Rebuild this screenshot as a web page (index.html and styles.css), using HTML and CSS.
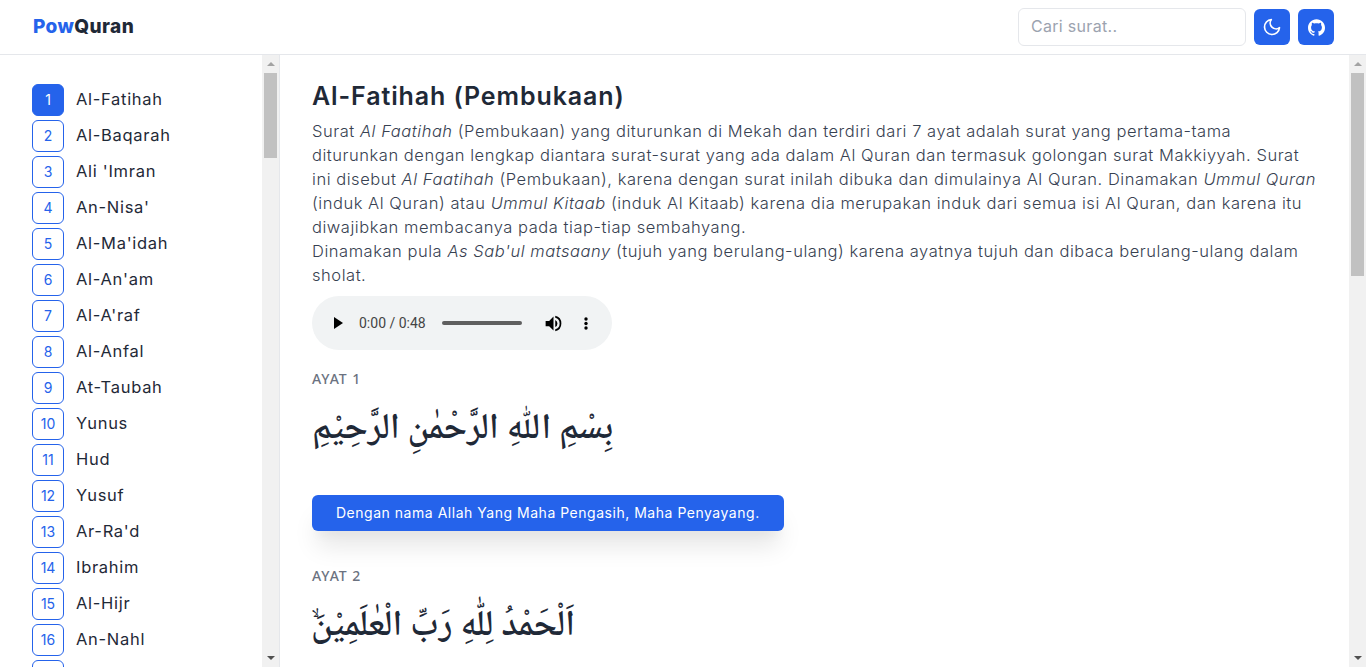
FILE: index.html
```html
<!DOCTYPE html>
<html>
<head>
<meta charset="utf-8">
<meta name="viewport" content="width=device-width, initial-scale=1">
<title>PowQuran</title>
<link rel="stylesheet" href="styles.css">
</head>
<body>

<header class="topbar">
  <a class="logo" href="#"><span class="logo-pow">Pow</span>Quran</a>
  <div class="topbar-right">
    <input class="search" type="text" placeholder="Cari surat..">
    <button class="icon-btn" type="button" aria-label="Mode gelap">
      <svg width="20" height="20" viewBox="0 0 24 24" fill="none" stroke="#fff" stroke-width="2" stroke-linecap="round" stroke-linejoin="round"><path d="M21 12.79A9 9 0 1 1 11.21 3 7 7 0 0 0 21 12.79z"/></svg>
    </button>
    <button class="icon-btn" type="button" aria-label="GitHub">
      <svg width="17" height="17" viewBox="0 0 24 24" fill="#fff"><path d="M12 .297c-6.63 0-12 5.373-12 12 0 5.303 3.438 9.8 8.205 11.385.6.113.82-.258.82-.577 0-.285-.01-1.04-.015-2.04-3.338.724-4.042-1.61-4.042-1.61C4.422 18.07 3.633 17.7 3.633 17.7c-1.087-.744.084-.729.084-.729 1.205.084 1.838 1.236 1.838 1.236 1.07 1.835 2.809 1.305 3.495.998.108-.776.417-1.305.76-1.605-2.665-.3-5.466-1.332-5.466-5.93 0-1.31.465-2.38 1.235-3.22-.135-.303-.54-1.523.105-3.176 0 0 1.005-.322 3.3 1.23.96-.267 1.98-.399 3-.405 1.02.006 2.04.138 3 .405 2.28-1.552 3.285-1.23 3.285-1.23.645 1.653.24 2.873.12 3.176.765.84 1.23 1.91 1.23 3.22 0 4.61-2.805 5.625-5.475 5.92.42.36.81 1.096.81 2.22 0 1.606-.015 2.896-.015 3.286 0 .315.21.69.825.57C20.565 22.092 24 17.592 24 12.297c0-6.627-5.373-12-12-12"/></svg>
    </button>
  </div>
</header>

<div class="layout">
  <div class="sidebar">
    <nav class="surah-list">
      <a class="surah active" href="#"><span class="num">1</span>Al-Fatihah</a>
      <a class="surah" href="#"><span class="num">2</span>Al-Baqarah</a>
      <a class="surah" href="#"><span class="num">3</span>Ali 'Imran</a>
      <a class="surah" href="#"><span class="num">4</span>An-Nisa'</a>
      <a class="surah" href="#"><span class="num">5</span>Al-Ma'idah</a>
      <a class="surah" href="#"><span class="num">6</span>Al-An'am</a>
      <a class="surah" href="#"><span class="num">7</span>Al-A'raf</a>
      <a class="surah" href="#"><span class="num">8</span>Al-Anfal</a>
      <a class="surah" href="#"><span class="num">9</span>At-Taubah</a>
      <a class="surah" href="#"><span class="num">10</span>Yunus</a>
      <a class="surah" href="#"><span class="num">11</span>Hud</a>
      <a class="surah" href="#"><span class="num">12</span>Yusuf</a>
      <a class="surah" href="#"><span class="num">13</span>Ar-Ra'd</a>
      <a class="surah" href="#"><span class="num">14</span>Ibrahim</a>
      <a class="surah" href="#"><span class="num">15</span>Al-Hijr</a>
      <a class="surah" href="#"><span class="num">16</span>An-Nahl</a>
      <a class="surah" href="#"><span class="num"></span></a>
    </nav>
    <div class="scrollbar">
      <span class="arrow-up"></span>
      <span class="thumb thumb-side"></span>
      <span class="arrow-down"></span>
    </div>
  </div>

  <div class="content">
    <main class="content-body">
      <h1 class="title">Al-Fatihah (Pembukaan)</h1>
      <p class="desc">Surat <i>Al Faatihah</i> (Pembukaan) yang diturunkan di Mekah dan terdiri dari 7 ayat adalah surat yang pertama-tama diturunkan dengan lengkap diantara surat-surat yang ada dalam Al Quran dan termasuk golongan surat Makkiyyah. Surat ini disebut <i>Al Faatihah</i> (Pembukaan), karena dengan surat inilah dibuka dan dimulainya Al Quran. Dinamakan <i>Ummul Quran</i> (induk Al Quran) atau <i>Ummul Kitaab</i> (induk Al Kitaab) karena dia merupakan induk dari semua isi Al Quran, dan karena itu diwajibkan membacanya pada tiap-tiap sembahyang.<br>Dinamakan pula <i>As Sab'ul matsaany</i> (tujuh yang berulang-ulang) karena ayatnya tujuh dan dibaca berulang-ulang dalam sholat.</p>

      <div class="player">
        <svg class="play" width="9" height="12" viewBox="0 0 9 12"><path d="M0 0l9 6-9 6z" fill="#000"/></svg>
        <span class="time">0:00 / 0:48</span>
        <span class="track"></span>
        <svg class="vol" width="21" height="21" viewBox="0 0 24 24" fill="#000"><path d="M3 9v6h4l5 5V4L7 9H3zm13.5 3A4.5 4.5 0 0 0 14 7.970v8.050A4.500 4.500 0 0 0 16.500 12zM14 3.230v2.060a7 7 0 0 1 0 13.420v2.060a9 9 0 0 0 0-17.540z"/></svg>
        <svg class="more" width="4" height="13" viewBox="0 0 4 13" fill="#000"><circle cx="2" cy="2" r="1.700"/><circle cx="2" cy="6.500" r="1.700"/><circle cx="2" cy="11" r="1.700"/></svg>
      </div>

      <section class="ayat">
        <div class="ayat-label">AYAT 1</div>
        <div class="arab" lang="ar" dir="rtl">بِسْمِ اللّٰهِ الرَّحْمٰنِ الرَّحِيْمِ</div>
        <div class="arti">Dengan nama Allah Yang Maha Pengasih, Maha Penyayang.</div>
      </section>
      <section class="ayat">
        <div class="ayat-label">AYAT 2</div>
        <div class="arab" lang="ar" dir="rtl">اَلْحَمْدُ لِلّٰهِ رَبِّ الْعٰلَمِيْنَ<span class="waqf">لا</span></div>
      </section>
    </main>
    <div class="scrollbar">
      <span class="arrow-up"></span>
      <span class="thumb thumb-main"></span>
      <span class="arrow-down"></span>
    </div>
  </div>
</div>

</body>
</html>
```

FILE: styles.css
```css
* {
  box-sizing: border-box;
}

html, body {
  height: 100%;
}

body {
  margin: 0;
  display: flex;
  flex-direction: column;
  overflow: hidden;
  font-family: Inter, "Noto Sans", sans-serif;
  color: #1f2937;
  background-color: white;
}

a {
  color: inherit;
  text-decoration: none;
}

/* top bar */
.topbar {
  flex: none;
  height: 55px;
  display: flex;
  align-items: center;
  justify-content: space-between;
  padding: 0 32px;
  border-bottom: 1px solid #e5e7eb;
}

.logo {
  font-size: 19px;
  font-weight: 800;
  letter-spacing: 0.4px;
  padding: 0 0 1px 1px;
}

.logo-pow {
  color: #2563eb;
}

.topbar-right {
  display: flex;
  align-items: center;
  gap: 8px;
}

.search {
  width: 228px;
  height: 38px;
  padding: 0 12px 2px;
  border: 1px solid #e5e7eb;
  border-radius: 6px;
  font-family: inherit;
  font-size: 16px;
  letter-spacing: 0.3px;
  outline: none;
}

.search::placeholder {
  color: #9ca3af;
}

.icon-btn {
  width: 36px;
  height: 36px;
  display: flex;
  align-items: center;
  justify-content: center;
  padding: 0;
  border: none;
  border-radius: 6px;
  background-color: #2563eb;
}

/* two columns under the bar */
.layout {
  flex: 1;
  min-height: 0;
  display: flex;
}

.sidebar {
  flex: none;
  width: 280px;
  display: flex;
  border-right: 1px solid #e5e7eb;
}

.surah-list {
  flex: 1;
  min-width: 0;
  padding: 29px 0 0 32px;
  overflow: hidden;
}

.surah {
  display: flex;
  align-items: flex-start;
  height: 32px;
  margin-bottom: 4px;
  font-size: 16.5px;
  line-height: 30px;
  letter-spacing: 0.7px;
}

.num {
  flex: none;
  width: 32px;
  height: 32px;
  margin-right: 12px;
  display: flex;
  align-items: center;
  justify-content: center;
  border: 1px solid #2563eb;
  border-radius: 6px;
  font-size: 14px;
  letter-spacing: 0;
  color: #2563eb;
}

.active .num {
  background-color: #2563eb;
  color: white;
}

.content {
  flex: 1;
  min-width: 0;
  display: flex;
}

.content-body {
  flex: 1;
  min-width: 0;
  padding: 25px 32px 0;
  overflow: hidden;
}

/* scrollbar drawn by hand, the browser here hides its own */
.scrollbar {
  flex: none;
  width: 17px;
  display: flex;
  flex-direction: column;
  align-items: center;
  background-color: #f1f1f1;
}

.arrow-up {
  width: 0;
  height: 0;
  margin: 7px 0 7px;
  border-left: 4px solid transparent;
  border-right: 4px solid transparent;
  border-bottom: 4px solid #a3a3a3;
}

.arrow-down {
  width: 0;
  height: 0;
  margin: auto 0 7px;
  border-left: 4px solid transparent;
  border-right: 4px solid transparent;
  border-top: 4px solid #505050;
}

.thumb {
  width: 13px;
  background-color: #c1c1c1;
}

.thumb-side {
  height: 85px;
}

.thumb-main {
  height: 203px;
}

.title {
  margin: 0 0 7px;
  font-size: 25px;
  line-height: 32px;
  font-weight: 600;
  letter-spacing: 0.9px;
}

.desc {
  margin: 0 0 9px;
  font-size: 16.5px;
  line-height: 24px;
  font-weight: 300;
  letter-spacing: 0.54px;
  color: #374151;
}

/* audio player */
.player {
  width: 300px;
  height: 54px;
  display: flex;
  align-items: center;
  padding: 0 22px;
  border-radius: 27px;
  background-color: #f1f3f4;
  margin-bottom: 19px;
}

.play {
  margin-right: 16px;
}

.time {
  width: 83px;
  font-family: Roboto, sans-serif;
  font-size: 14px;
  color: #444;
}

.track {
  width: 80px;
  height: 4px;
  border-radius: 2px;
  background-color: #5f5f5f;
}

.vol {
  margin-left: 21px;
}

.more {
  margin-left: 20px;
}

/* ayat blocks */
.ayat {
  margin-bottom: 35px;
}

.ayat-label {
  font-family: "Noto Sans", sans-serif;
  font-size: 14px;
  line-height: 20px;
  font-weight: 500;
  letter-spacing: 1px;
  color: #6b7280;
}

.arab {
  width: fit-content;
  height: 106px;
  padding-top: 12px;
  font-family: "Noto Naskh Arabic", "Amiri", "Scheherazade New", "DejaVu Sans", sans-serif;
  font-size: 36px;
  font-weight: 600;
  line-height: 60px;
  white-space: nowrap;
}

.waqf {
  display: inline-block;
  margin-right: -8px;
  font-size: 13px;
  line-height: 13px;
  vertical-align: 18px;
}

.arti {
  display: inline-block;
  padding: 8px 24px;
  border-radius: 6px;
  background-color: #2563eb;
  color: white;
  font-size: 14px;
  line-height: 20px;
  font-weight: 400;
  letter-spacing: 0.52px;
  box-shadow: 0 20px 25px -5px rgba(0, 0, 0, 0.1), 0 10px 10px -5px rgba(0, 0, 0, 0.04);
}
```
